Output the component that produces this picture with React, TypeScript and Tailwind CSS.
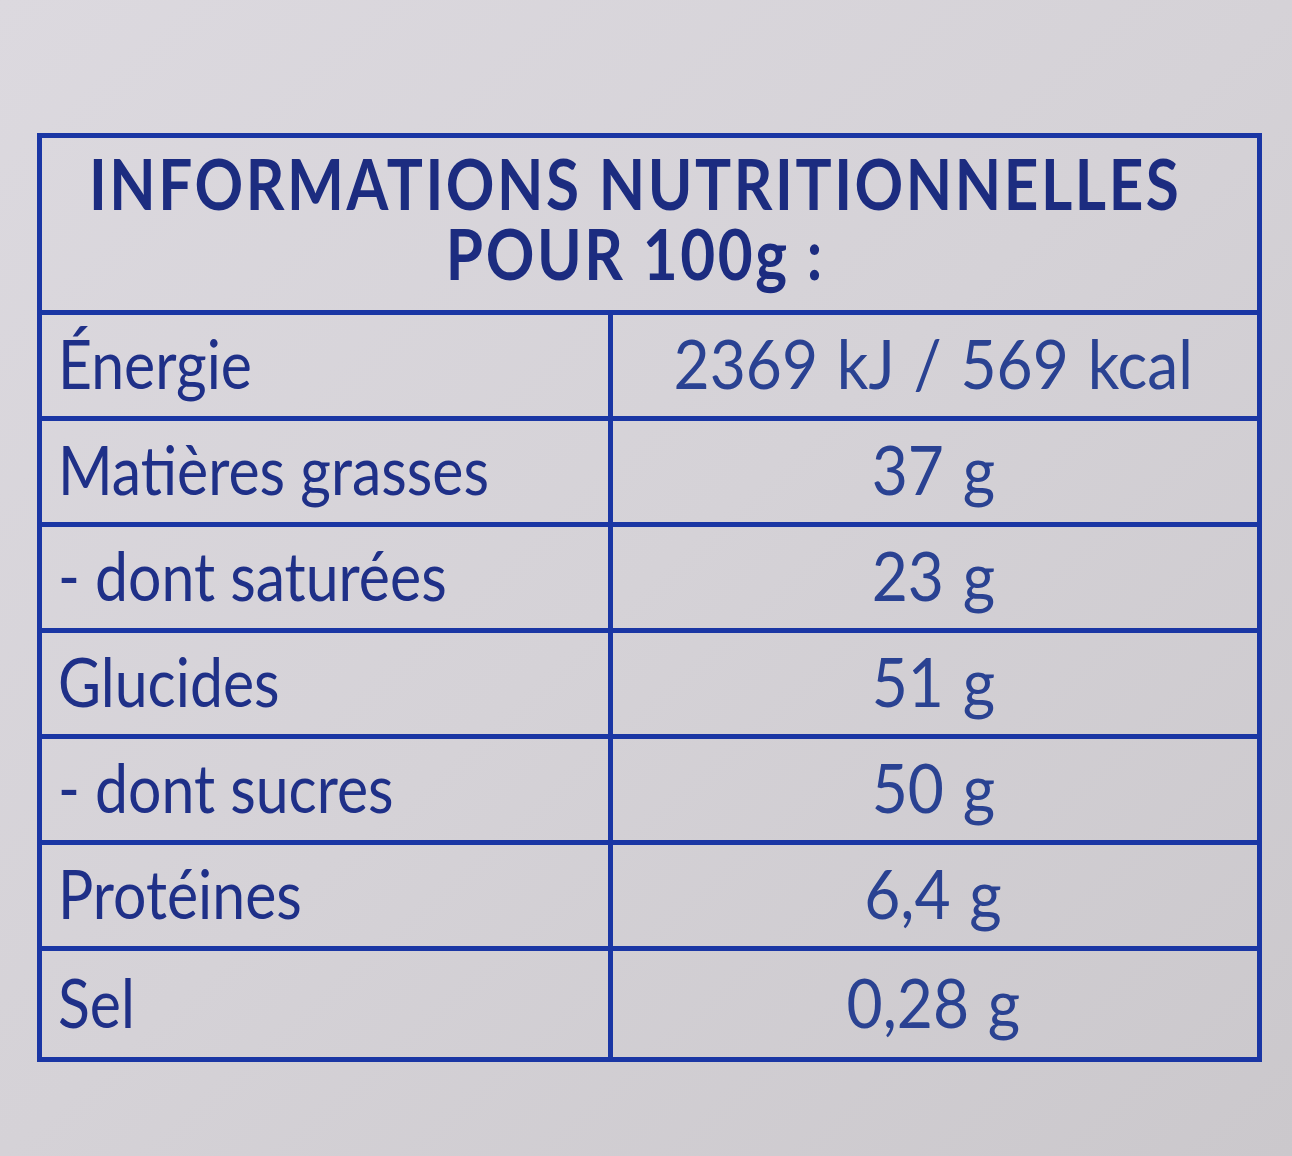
import React from "react";

const rows: [string, string][] = [
  ["Énergie", "2369 kJ / 569 kcal"],
  ["Matières grasses", "37 g"],
  ["- dont saturées", "23 g"],
  ["Glucides", "51 g"],
  ["- dont sucres", "50 g"],
  ["Protéines", "6,4 g"],
  ["Sel", "0,28 g"],
];

export default function App() {
  return (
    <div
      className="w-[1292px] h-[1156px] overflow-hidden bg-gradient-to-br from-[#dcd9df] via-[#d5d2d7] to-[#cbc8cc] pl-[37px] pt-[133px]"
      style={{ fontFamily: "Lato, 'Open Sans', sans-serif" }}
    >
      <div className="w-[1225px] border-[5px] border-[#1a36a4] text-[#1c2c80]">
        <div className="h-[177px] flex flex-col items-center justify-center pb-[12px] pr-[28px] border-b-[5px] border-[#1a36a4]">
          <div className="text-[70px] font-bold leading-[70px] tracking-[3px] whitespace-nowrap scale-x-[0.86] origin-center">
            INFORMATIONS NUTRITIONNELLES
          </div>
          <div className="text-[70px] font-bold leading-[70px] tracking-[3px] whitespace-nowrap scale-x-[0.86] origin-center">
            POUR 100g :
          </div>
        </div>
        {rows.map(([label, value], i) => (
          <div
            key={label}
            className={`flex h-[106px] ${i < rows.length - 1 ? "border-b-[5px] border-[#1a36a4]" : ""}`}
          >
            <div className="w-[571px] shrink-0 border-r-[5px] border-[#1a36a4] flex items-center pl-[16px] pb-[4px]">
              <span className="inline-block text-[67px] leading-none whitespace-nowrap scale-x-[0.88] origin-left text-[#1f3088]">
                {label}
              </span>
            </div>
            <div className="flex-1 flex items-center justify-center pb-[4px] pr-[4px]">
              <span className="inline-block text-[67px] leading-none whitespace-nowrap scale-x-[0.93] origin-center text-[#2a4292] [word-spacing:3px]">
                {value}
              </span>
            </div>
          </div>
        ))}
      </div>
    </div>
  );
}
